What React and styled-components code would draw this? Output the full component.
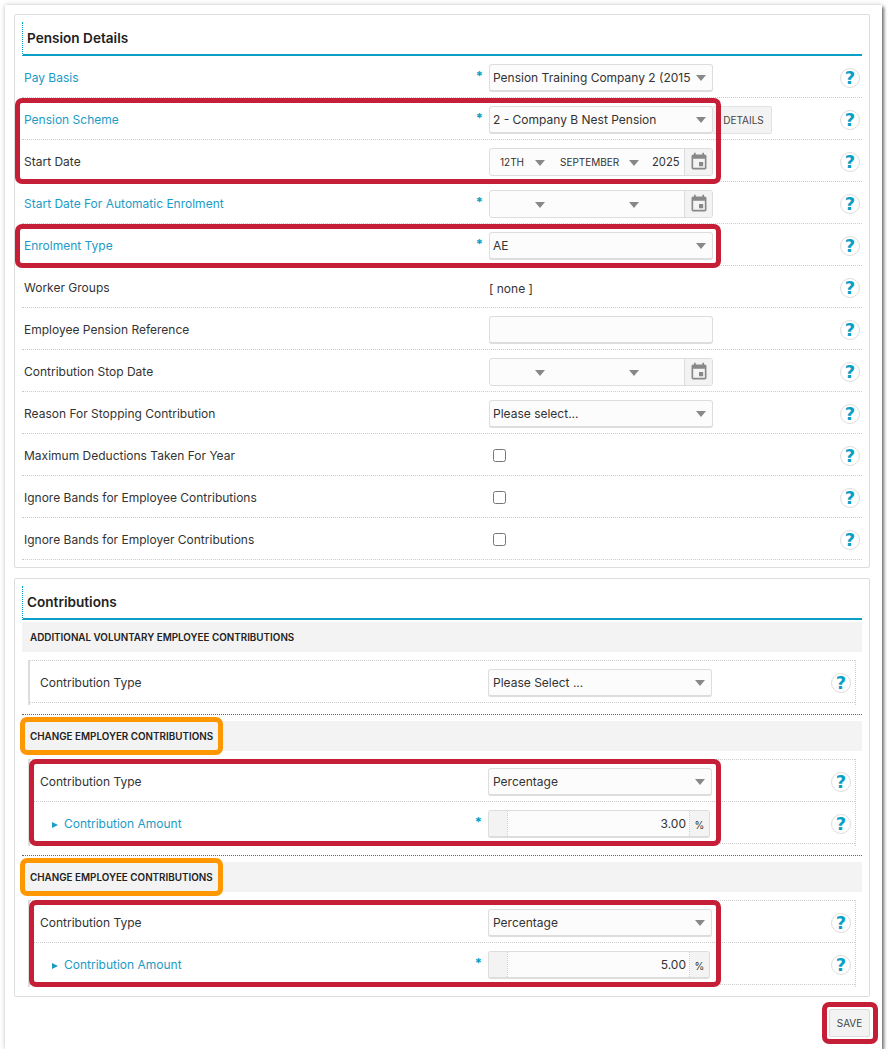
import React from 'react';
import styled, { createGlobalStyle } from 'styled-components';
import { MdEvent } from 'react-icons/md';

const GlobalStyle = createGlobalStyle`
  html, body { margin: 0; padding: 0; background: #fff; }
  body { font-family: Inter, "Liberation Sans", sans-serif; color: #333; }
`;

const Sheet = styled.div`
  box-sizing: border-box;
  width: 877px;
  height: 1044px;
  margin: 5px 0 0 5px;
  padding: 9px 12px 0 9px;
  background: #fff;
  box-shadow: 2px 2px 3px rgba(0, 0, 0, 0.5), 0 0 5px rgba(0, 0, 0, 0.2);
`;

const Panel = styled.section`
  box-sizing: border-box;
  border: 1px solid #ddd;
  border-radius: 2px;
  padding: 7px 7px ${p => p.$bottom}px;
  margin-bottom: 10px;
`;

const Title = styled.h2`
  box-sizing: border-box;
  height: 34px;
  margin: 0;
  padding: 7px 0 0 4px;
  font-size: 13.6px;
  line-height: 19px;
  font-weight: 600;
  color: #222;
  border-left: 1px dotted #0a9fc7;
  border-bottom: 2px solid #0a9fc7;
`;

const Row = styled.div`
  box-sizing: border-box;
  height: 42px;
  display: flex;
  align-items: center;
  padding: 0 2px;
  border-bottom: 1px dotted #ccc;
`;

const Label = styled.label`
  box-sizing: border-box;
  width: 465px;
  flex: none;
  position: relative;
  padding-top: 2px;
  font-size: 12px;
  line-height: 16px;
  color: ${p => (p.$link ? '#1c9bc6' : '#333')};
`;

const Star = styled.span`
  position: absolute;
  right: 6px;
  top: 0;
  font-size: 13px;
  font-weight: 700;
  color: #0a9fc7;
`;

const Field = styled.div`
  box-sizing: border-box;
  width: 224px;
  padding-top: 3px;
  flex: none;
  display: flex;
  align-items: center;
  position: relative;
`;

const Arrow = styled.i`
  display: block;
  flex: none;
  width: 0;
  height: 0;
  margin-left: auto;
  border-left: 5px solid transparent;
  border-right: 5px solid transparent;
  border-top: 6px solid #888;
`;

const Select = styled.div`
  box-sizing: border-box;
  width: 224px;
  height: 28px;
  display: flex;
  align-items: center;
  padding: 0 6px 0 3px;
  background: #fcfcfc;
  border: 1px solid #ddd;
  border-bottom-width: 2px;
  border-radius: 3px;
  color: #333;
  white-space: nowrap;
`;

const SelectText = styled.span`
  font-size: 12px;
`;

const TextInput = styled.div`
  box-sizing: border-box;
  width: 224px;
  height: 28px;
  background: #fcfcfc;
  border: 1px solid #ddd;
  border-bottom-width: 2px;
  border-radius: 3px;
`;

const DateBox = styled.div`
  box-sizing: border-box;
  width: 224px;
  height: 28px;
  display: flex;
  align-items: center;
  background: #fcfcfc;
  border: 1px solid #ddd;
  border-radius: 3px;
  overflow: hidden;
`;

const DatePart = styled.div`
  box-sizing: border-box;
  width: ${p => p.$width}px;
  padding-left: ${p => p.$pad}px;
  flex: none;
  display: flex;
  align-items: center;
  font-size: 10px;
  white-space: nowrap;

  ${Arrow} { margin-top: 2px; }
`;

const Year = styled.span`
  box-sizing: border-box;
  width: 45px;
  padding-left: 13px;
  font-size: 11.2px;
  flex: none;
`;

const CalendarAddon = styled.div`
  width: 28px;
  height: 100%;
  flex: none;
  display: flex;
  align-items: center;
  justify-content: center;
  background: #f3f3f3;
  border-left: 1px solid #ddd;
  color: #888;
`;

const DetailsButton = styled.button`
  box-sizing: border-box;
  position: absolute;
  left: 224px;
  top: 3px;
  width: 59px;
  height: 28px;
  padding: 0 0 0 3px;
  background: #f3f3f3;
  border: 1px solid #e2e2e2;
  border-left: 0;
  border-radius: 0 2px 2px 0;
  font: 10px Inter, sans-serif;
  color: #444;
`;

const Check = styled.input`
  width: 13px;
  height: 13px;
  margin: -1px 0 0 4px;
`;

const PlainValue = styled.span`
  font-size: 12px;
`;

const Help = styled.span`
  box-sizing: border-box;
  width: 20px;
  height: 20px;
  margin: 2px 0 0 auto;
  flex: none;
  display: flex;
  align-items: center;
  justify-content: center;
  border: 1px solid #ddd;
  border-radius: 50%;
  font-family: "DejaVu Sans", sans-serif;
  font-size: 18px;
  font-weight: 700;
  color: #0a9fc7;
`;

const SectionBar = styled.div`
  box-sizing: border-box;
  position: relative;
  height: 30px;
  margin-top: ${p => p.$top}px;
  padding-left: 8px;
  display: flex;
  align-items: center;
  background: #f3f3f3;
  font-size: 9.85px;
  font-weight: 600;
  color: #222;
`;

const Nested = styled.div`
  box-sizing: border-box;
  position: relative;
  margin: 8px 6px 0;
  padding: 0 0 2px 0;
  border-left: 2px solid #ddd;
  border-right: 1px dotted #ccc;
`;

const NestedRows = styled.div`
  border-top: 1px dotted #ccc;

  ${Row} { padding: 0 0 0 10px; }
  ${Label} { width: 448px; }
  ${Help} { margin-right: 4px; }
  ${SelectText} { padding-left: 1px; }
`;

const Divider = styled.div`
  margin-top: 9px;
  border-top: 1px dotted #666;
`;

const Caret = styled.i`
  display: inline-block;
  width: 0;
  height: 0;
  margin: 0 6px 0 12px;
  border-top: 3.5px solid transparent;
  border-bottom: 3.5px solid transparent;
  border-left: 6px solid #1c9bc6;
`;

const AmountBox = styled.div`
  box-sizing: border-box;
  width: 222px;
  height: 28px;
  display: flex;
  align-items: stretch;
  background: #fcfcfc;
  border: 1px solid #ddd;
  border-bottom-width: 2px;
  border-radius: 3px;
  overflow: hidden;
`;

const AmountAddon = styled.div`
  box-sizing: border-box;
  width: ${p => p.$width}px;
  flex: none;
  display: flex;
  align-items: center;
  justify-content: center;
  padding-top: 3px;
  background: #f3f3f3;
  font-size: 10px;
`;

const AmountValue = styled.div`
  flex: 1;
  display: flex;
  align-items: center;
  justify-content: flex-end;
  padding-right: 3px;
  font-size: 12px;
  border-left: 1px dotted #ccc;
  border-right: 1px dotted #ccc;
`;

const Marked = styled.div`
  position: relative;
`;

const Mark = styled.div`
  box-sizing: border-box;
  position: absolute;
  left: ${p => p.$left}px;
  top: ${p => p.$top}px;
  width: ${p => p.$width}px;
  height: ${p => p.$height}px;
  border: 5px solid ${p => (p.$orange ? '#ff9800' : '#c41f37')};
  border-radius: 7px;
  pointer-events: none;
`;

const Footer = styled.div`
  display: flex;
  justify-content: flex-end;
  margin-top: 12px;
`;

const SaveButton = styled.button`
  box-sizing: border-box;
  width: 41px;
  height: 28px;
  padding: 0;
  background: #f3f3f3;
  border: 1px solid #ddd;
  border-radius: 2px;
  font: 10px Inter, sans-serif;
  color: #444;
`;

const DateField = ({ day, month, year }) => (
  <DateBox>
    <DatePart $width={55} $pad={10}>{day}<Arrow /></DatePart>
    <DatePart $width={94} $pad={15}>{month}<Arrow /></DatePart>
    <Year>{year}</Year>
    <CalendarAddon><MdEvent size={20} /></CalendarAddon>
  </DateBox>
);

const FormRow = ({ label, link, required, children }) => (
  <Row>
    <Label $link={link}>{label}{required && <Star>*</Star>}</Label>
    <Field>{children}</Field>
    <Help>?</Help>
  </Row>
);

const Dropdown = ({ children }) => (
  <Select><SelectText>{children}</SelectText><Arrow /></Select>
);

const ContributionGroup = ({ amount }) => (
  <Nested>
    <NestedRows>
      <FormRow label="Contribution Type"><Dropdown>Percentage</Dropdown></FormRow>
      <FormRow label={<><Caret />Contribution Amount</>} link required>
        <AmountBox>
          <AmountAddon $width={18} />
          <AmountValue>{amount}</AmountValue>
          <AmountAddon $width={19}>%</AmountAddon>
        </AmountBox>
      </FormRow>
    </NestedRows>
    <Mark $left={-1} $top={0} $width={692} $height={87} />
  </Nested>
);

export default function App() {
  return (
    <Sheet>
      <GlobalStyle />
      <Panel $bottom={7}>
        <Title>Pension Details</Title>
        <FormRow label="Pay Basis" link required><Dropdown>Pension Training Company 2 (2015</Dropdown></FormRow>
        <Marked>
          <FormRow label="Pension Scheme" link required>
            <Dropdown>2 - Company B Nest Pension</Dropdown>
            <DetailsButton>DETAILS</DetailsButton>
          </FormRow>
          <FormRow label="Start Date"><DateField day="12TH" month="SEPTEMBER" year="2025" /></FormRow>
          <Mark $left={-7} $top={0} $width={706} $height={86} />
        </Marked>
        <FormRow label="Start Date For Automatic Enrolment" link required><DateField /></FormRow>
        <Marked>
          <FormRow label="Enrolment Type" link required><Dropdown>AE</Dropdown></FormRow>
          <Mark $left={-7} $top={0} $width={706} $height={44} />
        </Marked>
        <FormRow label="Worker Groups"><PlainValue>[ none ]</PlainValue></FormRow>
        <FormRow label="Employee Pension Reference"><TextInput /></FormRow>
        <FormRow label="Contribution Stop Date"><DateField /></FormRow>
        <FormRow label="Reason For Stopping Contribution"><Dropdown>Please select...</Dropdown></FormRow>
        <FormRow label="Maximum Deductions Taken For Year"><Check type="checkbox" /></FormRow>
        <FormRow label="Ignore Bands for Employee Contributions"><Check type="checkbox" /></FormRow>
        <FormRow label="Ignore Bands for Employer Contributions"><Check type="checkbox" /></FormRow>
      </Panel>

      <Panel $bottom={9}>
        <Title>Contributions</Title>
        <SectionBar $top={2}>ADDITIONAL VOLUNTARY EMPLOYEE CONTRIBUTIONS</SectionBar>
        <Nested>
          <NestedRows>
            <FormRow label="Contribution Type"><Dropdown>Please Select ...</Dropdown></FormRow>
          </NestedRows>
        </Nested>
        <Divider />
        <SectionBar $top={6}>
          CHANGE EMPLOYER CONTRIBUTIONS
          <Mark $orange $left={-2} $top={-4} $width={203} $height={38} />
        </SectionBar>
        <ContributionGroup amount="3.00" />
        <Divider />
        <SectionBar $top={6}>
          CHANGE EMPLOYEE CONTRIBUTIONS
          <Mark $orange $left={-2} $top={-4} $width={203} $height={38} />
        </SectionBar>
        <ContributionGroup amount="5.00" />
      </Panel>

      <Footer>
        <Marked>
          <SaveButton>SAVE</SaveButton>
          <Mark $left={-7} $top={-7} $width={56} $height={42} />
        </Marked>
      </Footer>
    </Sheet>
  );
}
